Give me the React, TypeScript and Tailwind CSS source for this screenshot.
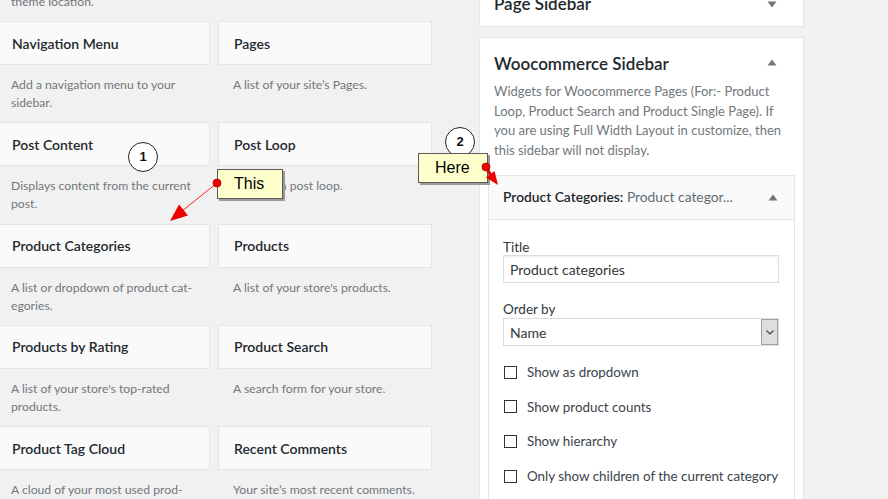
import React from 'react';

type Widget = { title: string; desc: string[] };

// widget rows in the available-widgets list (left, right)
const rows: [Widget, Widget][] = [
  [
    { title: 'Navigation Menu', desc: ['Add a navigation menu to your', 'sidebar.'] },
    { title: 'Pages', desc: ["A list of your site\u2019s Pages."] },
  ],
  [
    { title: 'Post Content', desc: ['Displays content from the current', 'post.'] },
    { title: 'Post Loop', desc: ['Displays a post loop.'] },
  ],
  [
    { title: 'Product Categories', desc: ['A list or dropdown of product cat-', 'egories.'] },
    { title: 'Products', desc: ["A list of your store's products."] },
  ],
  [
    { title: 'Products by Rating', desc: ["A list of your store's top-rated", 'products.'] },
    { title: 'Product Search', desc: ['A search form for your store.'] },
  ],
  [
    { title: 'Product Tag Cloud', desc: ['A cloud of your most used prod-', 'uct tags.'] },
    { title: 'Recent Comments', desc: ["Your site\u2019s most recent comments."] },
  ],
];

const checkboxes = [
  'Show as dropdown',
  'Show product counts',
  'Show hierarchy',
  'Only show children of the current category',
];

function WidgetCell({ w }: { w?: Widget }) {
  return (
    <div className="h-[101.25px]">
      <div className="h-[44px] border border-[#e5e5e5] bg-[#fafafa] px-[15px] flex items-center text-[14px] font-semibold text-[#23282d] whitespace-nowrap">
        {w?.title}
      </div>
      <div className="mt-[11px] px-[15px] text-[12.2px] leading-[18px] text-[#72777c] whitespace-nowrap">
        {w?.desc.map((l) => (
          <div key={l}>{l}</div>
        ))}
      </div>
    </div>
  );
}

function Caret({ up }: { up: boolean }) {
  return (
    <svg width="10" height="7" viewBox="0 0 10 7" className="block">
      {up ? <path d="M5 0.5 L9.5 6.5 L0.5 6.5 Z" fill="#72777c" /> : <path d="M0.5 0.5 L9.5 0.5 L5 6.5 Z" fill="#72777c" />}
    </svg>
  );
}

function Callout({ text, className }: { text: string; className: string }) {
  return (
    <div
      className={`absolute h-[30px] border border-[#5a5a5a] bg-[#ffffcc] shadow-[2px_2px_0_#9a9a9a] flex items-center font-['Liberation_Sans',Arial,sans-serif] text-[16px] text-black ${className}`}
    >
      {text}
    </div>
  );
}

function StepBadge({ n, className }: { n: number; className: string }) {
  return (
    <div
      className={`absolute w-[30px] h-[30px] rounded-full border-[1.6px] border-[#222] bg-white flex items-center justify-center font-['Liberation_Sans',Arial,sans-serif] text-[13px] font-bold text-[#111] ${className}`}
    >
      {n}
    </div>
  );
}

export default function App() {
  return (
    <div className="relative w-[888px] h-[499px] overflow-hidden bg-[#f1f1f1] font-['Lato','Noto_Sans',sans-serif]">
      <div className="flex items-start">
        {/* available widgets */}
        <div className="ml-[-4px] mt-[-80.25px] grid grid-cols-[214px_214px] gap-x-[8px]">
          <WidgetCell w={{ title: '', desc: ['Displays a menu from your chosen', 'theme location.'] }} />
          <WidgetCell />
          {rows.map(([a, b]) => (
            <React.Fragment key={a.title}>
              <WidgetCell w={a} />
              <WidgetCell w={b} />
            </React.Fragment>
          ))}
        </div>

        {/* sidebar areas */}
        <div className="ml-[47px] w-[325px] flex flex-col">
          <div className="mt-[-20px] h-[47px] border border-[#e5e5e5] bg-white px-[14px] flex items-center justify-between">
            <h3 className="text-[17px] font-semibold text-[#23282d]">Page Sidebar</h3>
            <div className="mr-[12px] mt-[1px]">
              <Caret up={false} />
            </div>
          </div>

          <div className="mt-[10px] h-[480px] border border-[#e5e5e5] bg-white pt-[14px] px-[8px]">
            <div className="px-[6px] flex items-center justify-between h-[24px]">
              <h3 className="text-[17px] font-semibold text-[#23282d]">Woocommerce Sidebar</h3>
              <div className="mr-[12px] mb-[4px]">
                <Caret up />
              </div>
            </div>
            <p className="mt-[6px] px-[6px] text-[13px] leading-[19.5px] text-[#72777c]">
              Widgets for Woocommerce Pages (For:- Product Loop, Product Search and Product Single Page). If you are using Full Width Layout in customize, then this sidebar will not display.
            </p>

            {/* expanded widget */}
            <div className="mt-[15px] border border-[#e5e5e5] bg-white">
              <div className="h-[44px] bg-[#fafafa] border-b border-[#e5e5e5] pl-[14px] pr-[16px] flex items-center justify-between">
                <div className="text-[13.8px] text-[#23282d] whitespace-nowrap">
                  <span className="font-semibold">Product Categories:</span>{' '}
                  <span className="text-[#606a73]">Product categor...</span>
                </div>
                <Caret up />
              </div>
              <div className="px-[14px] pt-[19px] pb-[30px]">
                <label className="block text-[13.5px] leading-[16px] text-[#32373c]">Title</label>
                <div className="h-[28px] w-[276px] border border-[#dddddd] shadow-[inset_0_1px_2px_rgba(0,0,0,0.07)] px-[6px] flex items-center text-[14px] text-[#32373c]">
                  Product categories
                </div>
                <label className="mt-[18px] block text-[13.5px] leading-[16px] text-[#32373c]">Order by</label>
                <div className="mt-[1px] h-[28px] w-[276px] border border-[#dddddd] flex items-center">
                  <span className="flex-1 pl-[6px] text-[14px] text-[#32373c]">Name</span>
                  <div className="h-[26px] w-[17px] border border-[#a0a0a0] bg-[#dedede] flex items-center justify-center">
                    <svg width="8" height="5" viewBox="0 0 8 5">
                      <path d="M0.5 0.5 L4 4 L7.5 0.5" fill="none" stroke="#444" strokeWidth="1.2" />
                    </svg>
                  </div>
                </div>
                <div className="mt-[16px] flex flex-col gap-[14.7px]">
                  {checkboxes.map((c) => (
                    <div key={c} className="h-[20px] flex items-center whitespace-nowrap">
                      <span className="ml-[1px] w-[13px] h-[13px] border border-[#333] bg-white" />
                      <span className="ml-[10px] text-[13.4px] text-[#3c434a]">{c}</span>
                    </div>
                  ))}
                </div>
              </div>
            </div>
          </div>
        </div>
      </div>

      {/* annotations */}
      <StepBadge n={1} className="left-[128px] top-[142px]" />
      <StepBadge n={2} className="left-[445px] top-[127px]" />
      <Callout text="This" className="left-[217px] top-[169px] w-[66px] pl-[16px]" />
      <Callout text="Here" className="left-[418px] top-[153px] w-[70px] pl-[16px]" />
      <svg className="absolute inset-0 pointer-events-none" width="888" height="499">
        <line x1="217" y1="183" x2="182" y2="211" stroke="#ff2020" strokeWidth="1" />
        <path d="M170 221 L188 215.5 L179 204.5 Z" fill="#ee0000" />
        <circle cx="217" cy="183" r="4" fill="#ee0000" stroke="#b00000" strokeWidth="0.8" />

        <line x1="486" y1="168" x2="491" y2="175" stroke="#ee0000" strokeWidth="3" />
        <path d="M498 185 L494.5 171 L486 177.5 Z" fill="#ee0000" />
        <circle cx="486" cy="167" r="4" fill="#ee0000" stroke="#b00000" strokeWidth="0.8" />
      </svg>
    </div>
  );
}
